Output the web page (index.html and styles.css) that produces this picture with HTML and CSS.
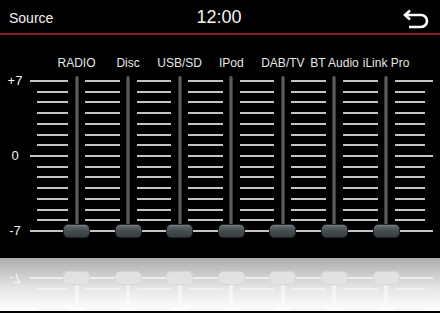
FILE: index.html
```html
<!DOCTYPE html>
<html lang="en">
<head>
    <meta charset="UTF-8">
    <meta name="viewport" content="width=device-width, initial-scale=1.0">
    <title>Source</title>
    <link rel="stylesheet" href="styles.css">
</head>
<body>

    <!-- Header -->
    <div class="header">
        <div class="title">Source</div>
        <div class="clock">12:00</div>
        <div class="back">
            <svg width="26" height="21" viewBox="0 0 26 21">
                <path d="M2 6 H18 A6 6 0 0 1 18 18 H6" fill="none" stroke="#fff" stroke-width="2.6"/>
                <path d="M7 1.5 L2 6 L7 10.5" fill="none" stroke="#fff" stroke-width="2.6" stroke-linejoin="miter"/>
            </svg>
        </div>
    </div>

    <!-- Nama sumber -->
    <div class="names">
        <div class="name"><span>RADIO</span></div>
        <div class="name"><span>Disc</span></div>
        <div class="name"><span>USB/SD</span></div>
        <div class="name"><span>IPod</span></div>
        <div class="name"><span>DAB/TV</span></div>
        <div class="name"><span>BT Audio</span></div>
        <div class="name"><span>iLink Pro</span></div>
    </div>

    <!-- Equalizer -->
    <div class="eq" id="eq">
        <div class="scale">
            <span>+7</span>
            <span>0</span>
            <span>-7</span>
        </div>
        <div class="board">
            <div class="ticks first"></div>
            <div class="fader"><div class="track"></div><div class="knob"></div></div>
            <div class="ticks"></div>
            <div class="fader"><div class="track"></div><div class="knob"></div></div>
            <div class="ticks"></div>
            <div class="fader"><div class="track"></div><div class="knob"></div></div>
            <div class="ticks"></div>
            <div class="fader"><div class="track"></div><div class="knob"></div></div>
            <div class="ticks"></div>
            <div class="fader"><div class="track"></div><div class="knob"></div></div>
            <div class="ticks"></div>
            <div class="fader"><div class="track"></div><div class="knob"></div></div>
            <div class="ticks"></div>
            <div class="fader"><div class="track"></div><div class="knob"></div></div>
            <div class="ticks last"></div>
        </div>
    </div>

    <!-- Pantulan -->
    <div class="reflection" id="reflection"></div>

    <script>
        const eq = document.getElementById('eq');
        const copy = eq.cloneNode(true);
        copy.removeAttribute('id');
        copy.classList.add('mirror');
        document.getElementById('reflection').appendChild(copy);
    </script>

</body>
</html>
```

FILE: styles.css
```css
body {
    margin: 0;
    width: 440px;
    height: 313px;
    overflow: hidden;
    background: #000;
    color: #f2f2f2;
    font-family: 'Liberation Sans', Arial, sans-serif;
}

.header {
    display: grid;
    grid-template-columns: 1fr auto 1fr;
    align-items: center;
    height: 35px;
    box-sizing: border-box;
    padding: 2px 11px 0 9px;
    border-bottom: 2px solid #8e1b22;
}

.title {
    font-size: 14px;
}

.clock {
    font-size: 18px;
}

.back {
    justify-self: end;
    display: flex;
    margin-top: 3px;
}

.names {
    display: flex;
    gap: 34.6px;
    margin-top: 21px;
    padding-left: 68px;
    height: 14px;
    line-height: 14px;
    font-size: 12px;
    color: #e6e6e6;
}

.name {
    width: 17px;
    display: flex;
    justify-content: center;
    white-space: nowrap;
}

.eq {
    display: flex;
    align-items: flex-start;
    margin-top: 4px;
}

.scale {
    width: 30px;
    height: 164px;
    display: flex;
    flex-direction: column;
    justify-content: space-between;
    align-items: center;
    font-size: 13px;
    line-height: 14px;
    color: #f2f2f2;
}

.board {
    display: flex;
    width: 403px;
    height: 163px;
    margin-top: 2px;
    box-sizing: border-box;
    padding: 0 8px 0 7px;
    background:
        linear-gradient(#c4c4c4, #c4c4c4) 0 4px / 100% 2px no-repeat,
        linear-gradient(#c4c4c4, #c4c4c4) 0 79px / 100% 2px no-repeat,
        linear-gradient(#c4c4c4, #c4c4c4) 0 154px / 100% 2px no-repeat;
}

.ticks {
    width: 34.6px;
    height: 156px;
    margin-top: 4px;
    background: repeating-linear-gradient(to bottom, #c4c4c4 0 2px, transparent 2px 10.714px);
}

.ticks.first {
    width: 31px;
}

.ticks.last {
    width: 30.4px;
}

.fader {
    position: relative;
    width: 17px;
    height: 163px;
    background: #000;
}

.track {
    width: 4px;
    height: 150px;
    margin: 0 auto;
    border-radius: 2px;
    background: linear-gradient(to right, #2a2a2a, #6a6a6a 50%, #2a2a2a);
}

.knob {
    position: absolute;
    left: -5px;
    top: 148px;
    width: 27px;
    height: 14px;
    box-sizing: border-box;
    border: 1px solid #1f2426;
    border-radius: 5px;
    background: linear-gradient(#646c70, #454c50 50%, #373d40);
    box-shadow: inset 0 1px 0 rgba(255, 255, 255, 0.15);
}

.reflection {
    height: 53px;
    margin-top: 19px;
    overflow: hidden;
    background: linear-gradient(#adadad, #e4e4e4 55%, #fff);
}

.eq.mirror {
    margin-top: 12px;
    transform: scaleY(-1);
    opacity: 0.85;
}

.mirror .scale {
    color: #fff;
}

.mirror .scale span:not(:last-child) {
    visibility: hidden;
}

.mirror .board {
    background:
        linear-gradient(#f4f4f4, #f4f4f4) 0 154px / 100% 2px no-repeat;
}

.mirror .ticks {
    background: repeating-linear-gradient(to bottom, #f4f4f4 0 2px, transparent 2px 10.714px);
}

.mirror .fader {
    background: transparent;
}

.mirror .track {
    background: rgba(255, 255, 255, 0.6);
}

.mirror .knob {
    border-color: #d6d8d8;
    background: #e4e6e6;
    box-shadow: none;
}
```
